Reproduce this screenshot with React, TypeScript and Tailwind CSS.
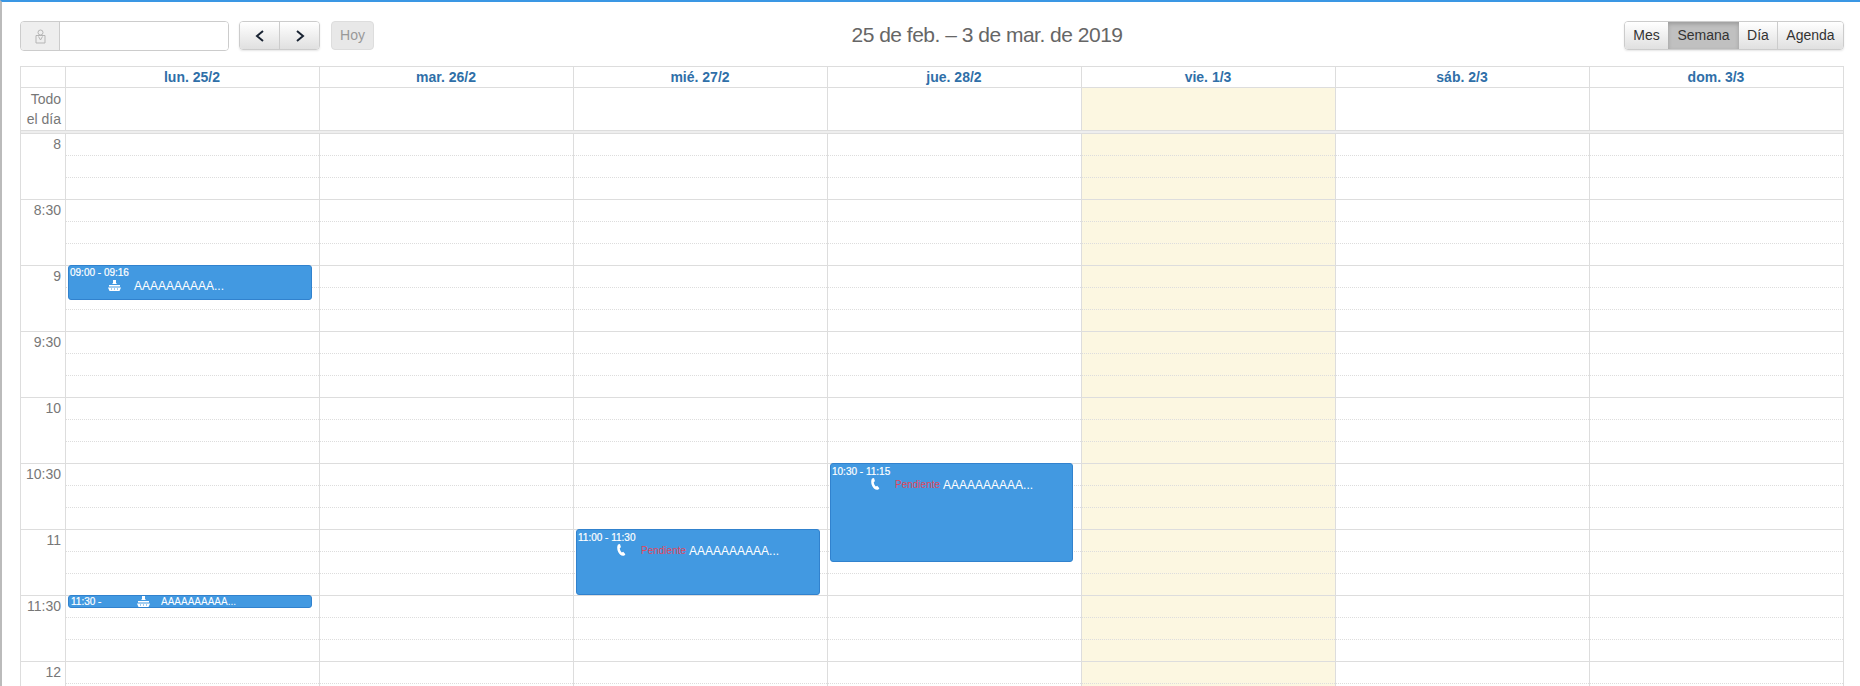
import type { ReactNode } from "react";

const days = ["lun. 25/2", "mar. 26/2", "mié. 27/2", "jue. 28/2", "vie. 1/3", "sáb. 2/3", "dom. 3/3"];
const labels = ["8", "8:30", "9", "9:30", "10", "10:30", "11", "11:30", "12"];
const slots = Array.from({ length: 27 }, (_, i) => i);

function BadgeIcon() {
    return (
        <svg width="11" height="15" viewBox="0 0 11 15" fill="none" stroke="#b5b5b5" strokeWidth="1">
            <circle cx="5.5" cy="3.5" r="2.5" />
            <path d="M1 6.5h9v7.5H1z" />
            <path d="M3.5 7.5l2 3.5 2-3.5" />
        </svg>
    );
}

function Chevron({ dir }: { dir: "left" | "right" }) {
    return (
        <svg width="10" height="12" viewBox="0 0 10 12" fill="none" stroke="#1a2433" strokeWidth="2">
            <path d={dir === "left" ? "M8 1L2 6l6 5" : "M2 1l6 5-6 5"} />
        </svg>
    );
}

function ShipIcon() {
    return (
        <svg width="13" height="11" viewBox="0 0 13 11" fill="white">
            <path d="M5 0h3v3l1 1H4l1-1z" />
            <path d="M1 5h11v1.5H1z" />
            <path d="M0 7.5h13L11.5 11h-10z" />
            <path d="M3 8.5h1v1H3zM6 8.5h1v1H6zM9 8.5h1v1H9z" fill="#4299e1" />
        </svg>
    );
}

function PhoneIcon() {
    return (
        <svg width="9" height="12" viewBox="0 0 9 12" fill="white">
            <path d="M1 0.6L3 0 4 3.2 2.8 4C2.8 5.6 3.6 7.4 4.8 8.4L6.2 7.8 8.4 10.2 7.4 11.4C5 12.4 2.6 10.8 1.2 8 0 5.4-0.2 2.4 1 0.6z" />
        </svg>
    );
}

function EventBox({ className, children }: { className: string; children: ReactNode }) {
    return (
        <div className={`absolute overflow-hidden rounded-[3px] border border-[#3182ce] bg-[#4299e1] text-white ${className}`}>
            {children}
        </div>
    );
}

function TimedEvent({ className, time }: { className: string; time: string }) {
    return (
        <EventBox className={className}>
            <div className="pl-[1px] text-[10px] font-medium [-webkit-text-stroke:0.2px_white] leading-[11px] mt-[2px]">{time}</div>
            <div className="flex items-center h-[14px] pl-[40px] text-[12px] leading-[14px]">
                <PhoneIcon />
                <span className="ml-[15px] mt-[2px] text-[10px] text-[#e0475b]">Pendiente</span>
                <span className="ml-[3px] mt-[1px]">AAAAAAAAAA...</span>
            </div>
        </EventBox>
    );
}

function DayColumn({ index }: { index: number }) {
    return (
        <div className={`relative w-[254px] shrink-0 border-r border-[#ddd] ${index === 4 ? "bg-[#fcf7e1]" : ""}`}>
            {slots.map((s) => (
                <div
                    key={s}
                    className={`h-[22px] border-b ${s % 3 === 2 ? "border-solid border-[#ddd]" : "border-dotted border-[#ddd]"}`}
                />
            ))}
            {index === 0 && (
                <>
                    <EventBox className="left-[2px] top-[131px] w-[244px] h-[35px]">
                        <div className="pl-[1px] text-[10px] font-medium [-webkit-text-stroke:0.2px_white] leading-[11px] mt-[1px]">09:00 - 09:16</div>
                        <div className="flex items-center h-[14px] pl-[39px] text-[12px] leading-[14px]">
                            <ShipIcon />
                            <span className="ml-[13px] mt-[1px]">AAAAAAAAAA...</span>
                        </div>
                    </EventBox>
                    <EventBox className="left-[2px] top-[461px] w-[244px] h-[13px]">
                        <div className="flex items-center h-[11px] pl-[2px] leading-[11px]">
                            <span className="w-[66px] shrink-0 text-[10px] font-medium [-webkit-text-stroke:0.2px_white]">11:30 -</span>
                            <ShipIcon />
                            <span className="ml-[11px] text-[10px]">AAAAAAAAAA...</span>
                        </div>
                    </EventBox>
                </>
            )}
            {index === 2 && <TimedEvent className="left-[2px] top-[395px] w-[244px] h-[66px]" time="11:00 - 11:30" />}
            {index === 3 && <TimedEvent className="left-[2px] top-[329px] w-[243px] h-[99px]" time="10:30 - 11:15" />}
        </div>
    );
}

export default function App() {
    return (
        <div className="h-[686px] overflow-hidden bg-white border-t-2 border-l-2 border-t-[#3a97e4] border-l-[#bbb] font-['Liberation_Sans',Arial,sans-serif] text-[14px]">
            {/* Toolbar */}
            <div className="relative flex items-start justify-between h-[64px] pl-[18px] pr-[16px] pt-[19px]">
                <div className="flex items-start">
                    <div className="flex w-[209px] h-[30px] rounded-[4px] border border-[#ccc] overflow-hidden">
                        <div className="flex w-[39px] items-center justify-center bg-[#eee] border-r border-[#ccc]">
                            <BadgeIcon />
                        </div>
                        <div className="flex-1 bg-white" />
                    </div>
                    <div className="flex ml-[10px] h-[29px] rounded-[4px] border border-[#ccc] overflow-hidden shadow-[0_1px_2px_rgba(0,0,0,0.1)]">
                        <button className="flex w-[40px] items-center justify-center bg-gradient-to-b from-white to-[#e0e0e0] border-r border-[#ccc]">
                            <Chevron dir="left" />
                        </button>
                        <button className="flex w-[39px] items-center justify-center bg-gradient-to-b from-white to-[#e0e0e0]">
                            <Chevron dir="right" />
                        </button>
                    </div>
                    <button className="ml-[11px] w-[43px] h-[29px] rounded-[4px] border border-[#ddd] bg-[#e8e8e8] text-[#999]">
                        Hoy
                    </button>
                </div>
                <h2 className="absolute left-0 right-0 top-[20px] text-center pl-[112px] text-[21px] leading-[26px] tracking-[-0.5px] text-[#666]">
                    25 de feb. – 3 de mar. de 2019
                </h2>
                <div className="flex h-[29px] rounded-[4px] border border-[#ccc] overflow-hidden text-[#333] shadow-[0_1px_2px_rgba(0,0,0,0.1)]">
                    <button className="w-[43px] bg-gradient-to-b from-white to-[#e0e0e0]">Mes</button>
                    <button className="w-[71px] bg-[#c0c0c0] shadow-[inset_0_2px_4px_rgba(0,0,0,0.2)]">Semana</button>
                    <button className="w-[39px] bg-gradient-to-b from-white to-[#e0e0e0] border-r border-[#ccc]">Día</button>
                    <button className="w-[65px] bg-gradient-to-b from-white to-[#e0e0e0]">Agenda</button>
                </div>
            </div>

            {/* Calendar */}
            <div className="ml-[18px] w-[1824px] border-l border-t border-[#ddd]">
                <div className="flex h-[21px] border-b border-[#ddd]">
                    <div className="w-[45px] shrink-0 border-r border-[#ddd]" />
                    {days.map((d) => (
                        <div
                            key={d}
                            className="w-[254px] shrink-0 border-r border-[#ddd] pr-[1px] text-center text-[14px] font-bold leading-[20px] text-[#2f6fa8]"
                        >
                            {d}
                        </div>
                    ))}
                </div>
                <div className="flex h-[43px] border-b border-[#ddd]">
                    <div className="w-[45px] shrink-0 border-r border-[#ddd] pt-[1px] pr-[4px] text-right leading-[20px] text-[#777]">
                        Todo
                        <br />
                        el día
                    </div>
                    {days.map((d, i) => (
                        <div key={d} className={`w-[254px] shrink-0 border-r border-[#ddd] ${i === 4 ? "bg-[#fcf7e1]" : ""}`} />
                    ))}
                </div>
                <div className="h-[3px] bg-[#eee] border-b border-r border-[#ddd]" />
                <div className="flex">
                    <div className="w-[45px] shrink-0 border-r border-[#ddd]">
                        {labels.map((l) => (
                            <div key={l} className="h-[66px] border-b border-[#ddd] pr-[4px] text-right leading-[20px] text-[#777]">
                                {l}
                            </div>
                        ))}
                    </div>
                    {days.map((d, i) => (
                        <DayColumn key={d} index={i} />
                    ))}
                </div>
            </div>
        </div>
    );
}
